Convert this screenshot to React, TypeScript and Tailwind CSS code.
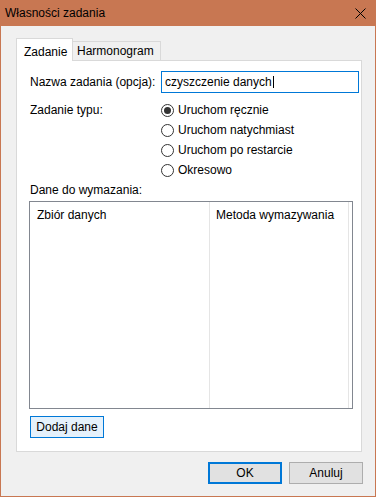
import React from "react";

const font = { fontFamily: '"Liberation Sans", Arial, sans-serif' };

function Radio({ label, checked }: { label: string; checked?: boolean }) {
  return (
    <div className="flex h-[20px] items-center">
      <span className="flex h-[13px] w-[13px] items-center justify-center rounded-full border border-[#333333] bg-white">
        {checked && <span className="h-[7px] w-[7px] rounded-full bg-[#333333]" />}
      </span>
      <span className="ml-[4px]">{label}</span>
    </div>
  );
}

export default function App() {
  return (
    <div
      className="flex h-[497px] w-[376px] flex-col border border-t-0 border-[#c87752] bg-[#f0f0f0] text-[12px] text-black"
      style={font}
    >
      <div className="flex h-[26px] shrink-0 items-center justify-between bg-[#c87752] pl-[4px] pr-[9px]">
        <span className="leading-none">Własności zadania</span>
        <svg width="11" height="11" viewBox="0 0 11 11">
          <path d="M0.5 0.5 L10.5 10.5 M10.5 0.5 L0.5 10.5" stroke="#000" strokeWidth="1" />
        </svg>
      </div>

      <div className="flex flex-col pl-[15px] pt-[12px]">
        <div className="flex items-end">
          <div className="relative z-10 -mb-px flex h-[23px] w-[57px] items-start border border-b-0 border-[#d9d9d9] bg-white pl-[7px] pt-[4px]">
            Zadanie
          </div>
          <div className="flex h-[19px] w-[88px] items-center border border-b-0 border-l-0 border-[#d9d9d9] bg-[#f0f0f0] pl-[4px]">
            Harmonogram
          </div>
        </div>

        <div className="flex h-[392px] w-[346px] flex-col border border-[#d9d9d9] bg-white pl-[13px] pt-[10px]">
          <div className="flex h-[22px] items-center">
            <span className="w-[131px]">Nazwa zadania (opcja):</span>
            <div className="flex h-[22px] w-[198px] items-center border border-[#0078d7] pl-[3px]">
              <span>czyszczenie danych</span>
              <span className="ml-px h-[12px] w-px bg-black" />
            </div>
          </div>

          <div className="mt-[7px] flex">
            <span className="flex h-[20px] w-[131px] items-center">Zadanie typu:</span>
            <div className="flex flex-col">
              <Radio label="Uruchom ręcznie" checked />
              <Radio label="Uruchom natychmiast" />
              <Radio label="Uruchom po restarcie" />
              <Radio label="Okresowo" />
            </div>
          </div>

          <div className="flex h-[20px] items-center">Dane do wymazania:</div>

          <div className="-ml-px mt-[1px] flex h-[208px] w-[324px] border border-[#828790] bg-white">
            <div className="flex h-full w-[180px] border-r border-[#e5e5e5] pl-[7px] pt-[6px]">
              <span className="leading-[14px]">Zbiór danych</span>
            </div>
            <div className="flex h-full w-[139px] border-r border-[#e5e5e5] pl-[6px] pt-[6px]">
              <span className="leading-[14px]">Metoda wymazywania</span>
            </div>
          </div>

          <div className="mt-[7px] flex h-[22px] w-[74px] items-center justify-center border border-[#0078d7] bg-[#e5f1fb]">
            Dodaj dane
          </div>
        </div>

        <div className="mt-[10px] flex justify-end gap-[7px] pr-[12px]">
          <div className="flex h-[22px] w-[74px] items-center justify-center border-2 border-[#0078d7] bg-[#e1e1e1]">
            OK
          </div>
          <div className="flex h-[22px] w-[74px] items-center justify-center border border-[#adadad] bg-[#e1e1e1]">
            Anuluj
          </div>
        </div>
      </div>
    </div>
  );
}
